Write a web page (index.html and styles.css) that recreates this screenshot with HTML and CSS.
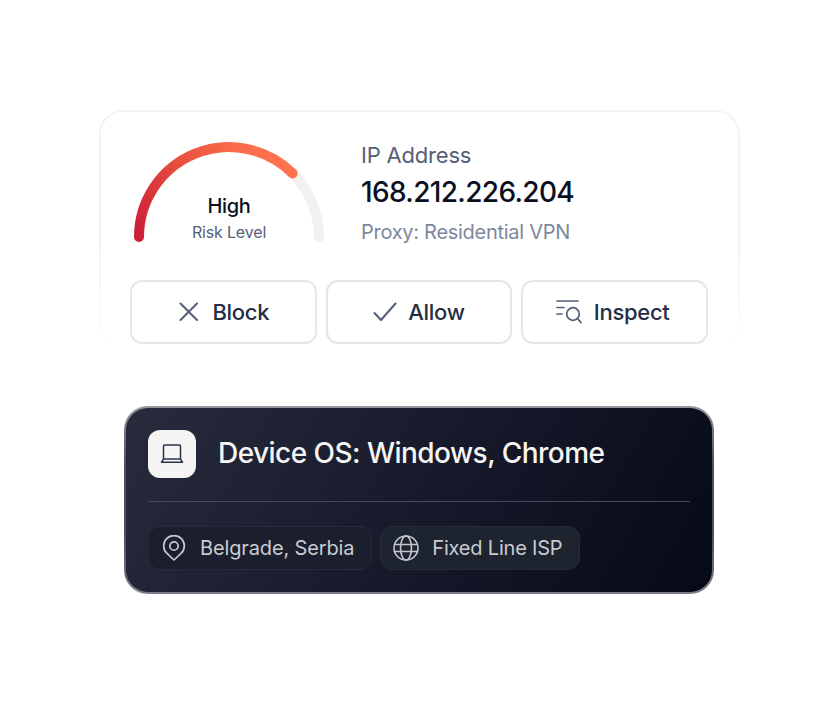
FILE: index.html
```html
<!DOCTYPE html>
<html lang="en">
<head>
<meta charset="utf-8">
<title>Risk</title>
<link rel="stylesheet" href="styles.css">
</head>
<body>
<main class="stage">
  <section class="risk-card">
    <div class="risk-top">
      <div class="gauge">
        <svg class="gauge-arc" width="200" height="112" viewBox="0 0 200 112" fill="none">
          <defs>
            <linearGradient id="arcGrad" x1="10" y1="106" x2="150" y2="20" gradientUnits="userSpaceOnUse">
              <stop offset="0" stop-color="#cc1f36"/>
              <stop offset="0.45" stop-color="#e8503f"/>
              <stop offset="0.8" stop-color="#fb6d4a"/>
              <stop offset="1" stop-color="#ff7350"/>
            </linearGradient>
          </defs>
          <path d="M10 106A90 90 0 0 1 190 106" stroke="#f2f1ef" stroke-width="10" stroke-linecap="round"/>
          <path d="M10 106A90 90 0 0 1 163.6 42.4" stroke="url(#arcGrad)" stroke-width="10" stroke-linecap="round"/>
        </svg>
        <div class="gauge-value">High</div>
        <div class="gauge-label">Risk Level</div>
      </div>
      <div class="ip">
        <div class="ip-label">IP Address</div>
        <div class="ip-value">168.212.226.204</div>
        <div class="ip-proxy">Proxy: Residential VPN</div>
      </div>
    </div>
    <div class="actions">
      <button class="action">
        <svg width="24" height="24" viewBox="0 0 24 24" fill="none" stroke="#525f77" stroke-width="2" stroke-linecap="round"><path d="M3.500 3.500 20 20M20 3.500 3.500 20"/></svg>
        Block
      </button>
      <button class="action">
        <svg width="24" height="24" viewBox="0 0 24 24" fill="none" stroke="#525f77" stroke-width="2" stroke-linecap="round" stroke-linejoin="round"><path d="M1.500 13 8 20 22.500 3.500"/></svg>
        Allow
      </button>
      <button class="action action-inspect">
        <svg width="28" height="26" viewBox="0 0 28 26" fill="none" stroke="#525f77" stroke-width="1.700" stroke-linecap="round"><path d="M2 2H23M2 8.500H9M2 15H7"/><circle cx="18" cy="15" r="6.300"/><path d="M22.500 19.700 26 23.500"/></svg>
        Inspect
      </button>
    </div>
  </section>

  <section class="device-card">
    <div class="device-head">
      <div class="device-icon">
        <svg width="24" height="24" viewBox="0 0 24 24" fill="none" stroke="#2b3349" stroke-width="1.500" stroke-linejoin="round" stroke-linecap="round"><path d="M3.500 4a1 1 0 0 1 1-1h15a1 1 0 0 1 1 1V17H3.500ZM1.500 20.300h21M3.500 17 1.500 20.300M20.500 17l2 3.300"/></svg>
      </div>
      <h2 class="device-title">Device OS: Windows, Chrome</h2>
    </div>
    <div class="divider"></div>
    <div class="chips">
      <div class="chip chip-dim">
        <svg width="26" height="26" viewBox="0 0 26 26" fill="none" stroke="#c4c7cf" stroke-width="1.700"><path d="M13 25 6 18.400a10.300 10.300 0 1 1 14 0Z" stroke-linejoin="round"/><circle cx="13" cy="11" r="4.200"/></svg>
        <span>Belgrade, Serbia</span>
      </div>
      <div class="chip">
        <svg width="26" height="26" viewBox="0 0 26 26" fill="none" stroke="#c4c7cf" stroke-width="1.600"><circle cx="13" cy="13" r="12"/><ellipse cx="13" cy="13" rx="5.500" ry="12"/><path d="M1.800 9.500H24.200M1.800 16.500H24.200"/></svg>
        <span>Fixed Line ISP</span>
      </div>
    </div>
  </section>
</main>
</body>
</html>
```
FILE: styles.css
```css
* { box-sizing: border-box; }
html, body { margin: 0; background: #fff; }
body { width: 838px; height: 704px; overflow: hidden; font-family: Inter, "Liberation Sans", sans-serif; }
.stage { display: flex; flex-direction: column; padding: 110px 0 0 99px; }

.risk-card { position: relative; width: 641px; height: 234px; padding: 26px 31px 0; }
.risk-card::before {
  content: "";
  position: absolute;
  inset: 0 0 -6px 0;
  border: 2px solid #f3f3f3;
  border-radius: 24px;
  -webkit-mask-image: linear-gradient(#000 55%, transparent 100%);
  mask-image: linear-gradient(#000 55%, transparent 100%);
  pointer-events: none;
}
.risk-top { position: relative; display: flex; height: 144px; }
.gauge { position: relative; width: 200px; height: 112px; flex: none; margin-left: -1px; display: flex; flex-direction: column; align-items: center; }
.gauge-arc { position: absolute; left: 0; top: -5px; }
.gauge-value { position: relative; margin-top: 58px; font-size: 20px; line-height: 24px; font-weight: 500; color: #0b0f1e; letter-spacing: -0.3px; }
.gauge-label { position: relative; margin-top: 4px; font-size: 16px; line-height: 20px; color: #556079; letter-spacing: -0.16px; }

.ip { margin-left: 32px; display: flex; flex-direction: column; }
.ip-label { margin-top: 6px; font-size: 22px; line-height: 26px; color: #556079; letter-spacing: -0.2px; }
.ip-value { margin-top: 6px; font-size: 28px; line-height: 36px; font-weight: 500; color: #0b0f1e; letter-spacing: -0.65px; }
.ip-proxy { margin-top: 9px; font-size: 20px; line-height: 26px; color: #7d879b; letter-spacing: -0.28px; }

.actions { position: relative; display: grid; grid-template-columns: repeat(3, 1fr); gap: 9px; width: 578px; }
.action {
  height: 64px;
  display: flex;
  align-items: center;
  justify-content: center;
  gap: 11px;
  background: #fff;
  border: 2px solid #e6e6e6;
  border-radius: 12px;
  font: 450 22px/28px Inter, "Liberation Sans", sans-serif;
  letter-spacing: -0.28px;
  color: #252e45;
  padding: 0;
}
.action-inspect { padding-right: 5px; }

.device-card {
  width: 590px;
  height: 188px;
  margin: 62px 0 0 25px;
  padding: 22px;
  border: 2px solid transparent;
  border-radius: 24px;
  background:
    linear-gradient(120deg, #272b3c 0%, #161a2b 50%, #060916 100%) padding-box,
    linear-gradient(#96969f, #50505e 30%, #50505e 70%, #7e7e8a) border-box;
  color: #fff;
}
.device-head { display: flex; align-items: center; gap: 22px; height: 48px; }
.device-icon { width: 48px; height: 48px; flex: none; display: flex; align-items: center; justify-content: center; background: #f6f5f4; border-radius: 12px; }
.device-title { margin: 0; font-size: 28px; line-height: 36px; font-weight: 450; color: #f6f5f4; letter-spacing: -0.54px; position: relative; top: -1px; }
.divider { height: 1px; margin-top: 23px; background: #444a5c; }
.chips { display: flex; gap: 8px; margin-top: 24px; }
.chip {
  height: 44px;
  display: flex;
  align-items: center;
  gap: 13px;
  padding: 0 17px 0 12px;
  border: 1px solid #262b3a;
  border-radius: 12px;
  background: #1e2330;
  font-size: 20px;
  line-height: 24px;
  letter-spacing: -0.2px;
  color: #c8cbd2;
}
.chip-dim { background: #1b1f2d; letter-spacing: -0.14px; }
```
